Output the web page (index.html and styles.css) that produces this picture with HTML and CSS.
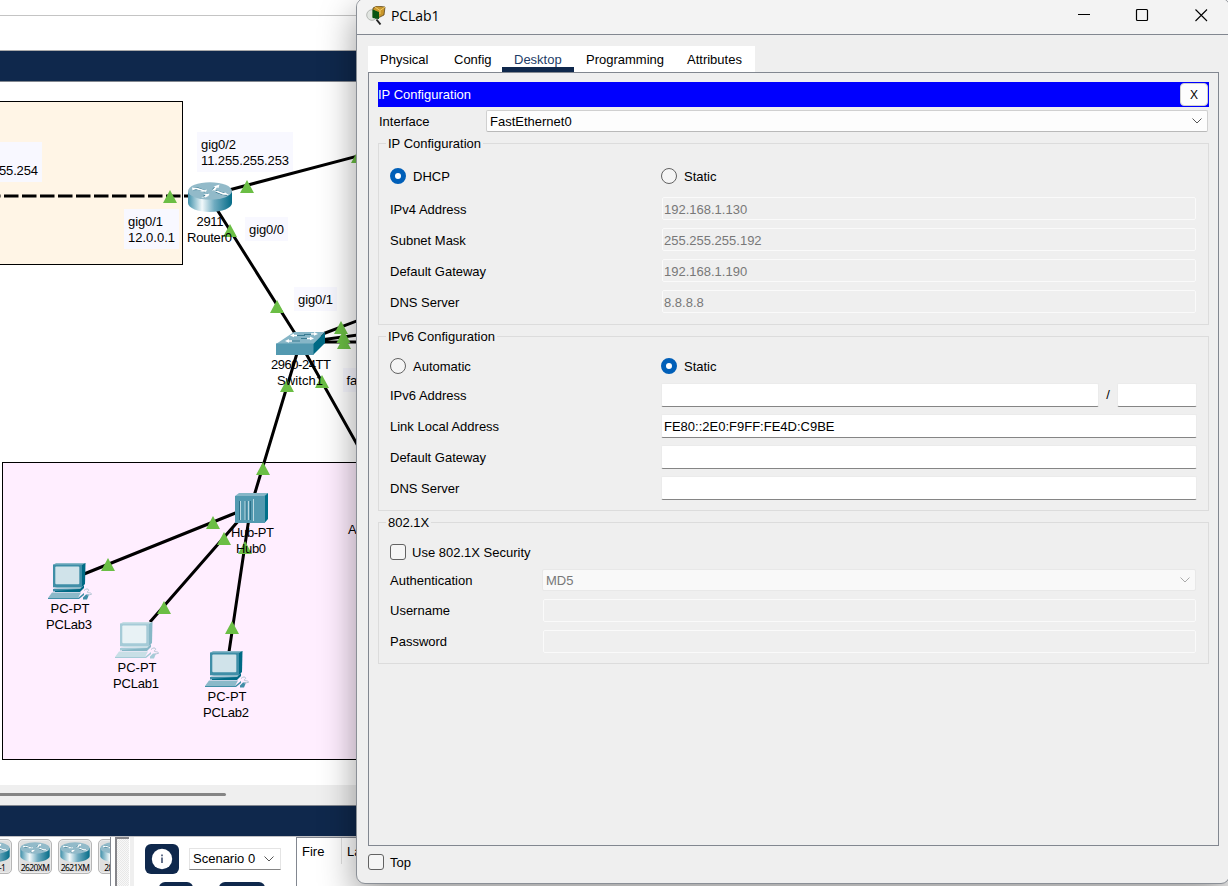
FILE: index.html
```html
<!DOCTYPE html>
<html lang="en">
<head>
<meta charset="utf-8">
<title>PCLab1</title>
<link rel="stylesheet" href="styles.css">
</head>
<body>
<svg class="defs" width="0" height="0">
  <defs>
    <linearGradient id="body" x1="0" x2="1" y1="0" y2="0">
      <stop offset="0" stop-color="#3f90aa"/><stop offset=".32" stop-color="#f2f9fb"/>
      <stop offset=".6" stop-color="#6fabc0"/><stop offset="1" stop-color="#046c88"/>
    </linearGradient>
    <symbol id="router" viewBox="0 0 44 30">
      <path d="M0 9v12c0 5 10 9 22 9s22-4 22-9V9z" fill="url(#body)"/>
      <ellipse cx="22" cy="9" rx="22" ry="8.7" fill="#92bac9"/>
      <g fill="none" stroke="#2b7089" stroke-width="2.4">
        <path d="M5 7l5-.3 7 2.600M15.500 15l4.500-2.500M25 8l3-3M39 12.500l-5-1-6-2.200"/>
      </g>
      <g fill="#fff">
        <path d="M4 5.500l6 .5 7 2.300 2-.8-1 2.200h-6l2-.7-6-1.800-3.500 1z"/>
        <path d="M24 8.500l3-3.500-1.500-.5 6-2-1 3.500-1.500-.6-2 3z"/>
        <path d="M27 9.500l2.500-.8 6 2.300 2-.5 3.500 2.500-6-.2z"/>
        <path d="M13 15.500l3.500-1.200 1-1.300-2-.7 6-.5-1 2.200-3 1.500z"/>
      </g>
    </symbol>
    <symbol id="pc" viewBox="0 0 44 37">
      <path class="pc-light" d="M5 2l3-2h30l-4 2z"/>
      <path class="pc-dark" d="M33.500 2l4-2-.5 21-3.500 3.500z"/>
      <rect class="pc-mid" x="5" y="1.500" width="29" height="22.800"/>
      <rect class="pc-screen" x="7.300" y="3.500" width="24" height="17.800" rx="1"/>
      <path class="pc-light" d="M5 25.500l4-1.500h26l-3 2z"/>
      <path class="pc-mid" d="M5 26h27v2.500H5z"/>
      <path class="pc-dark" d="M32 26l4-4v3l-4 4H7v-1z"/>
      <path class="pc-light" d="M4 29.500h29l-3 5.500H0z"/>
      <path class="pc-mid" d="M0 35h30l6-5v2l-5 4H0zM35 34.500l3-3h3l-2 5h-4z"/>
      <path class="pc-wire" d="M36 27.500c3-3 6-1 4 .8-3 2 4 .7 3.500 3l-4 1"/>
    </symbol>
    <path id="tri" d="M0 0l7 13H-7z" fill="#6bbe45"/>
  </defs>
</svg>

<main class="app">
  <div class="menu-strip"></div>
  <div class="tool-strip"></div>
  <div class="navy"></div>
  <svg class="canvas" width="356" height="703" viewBox="0 82 356 703">
    <rect x="-5" y="101.500" width="187.500" height="163" fill="#fff5e6" stroke="#000"/>
    <rect x="2.500" y="462.500" width="400" height="297" fill="#ffeeff" stroke="#000"/>
    <g fill="#f8f8ff">
      <rect x="0" y="142" width="42" height="40"/><rect x="197" y="132" width="96" height="40"/>
      <rect x="124" y="209" width="55" height="40"/><rect x="245" y="217" width="43" height="24"/>
      <rect x="294" y="287" width="43" height="24"/><rect x="343" y="368" width="30" height="24"/>
    </g>
    <g stroke="#000" stroke-width="3" fill="none">
      <path d="M-14 196H190" stroke-dasharray="14.500 3.500"/>
      <path d="M228 190.200L358 156M216 208L296 335M320 335L358 320.500M320 340L358 335M320 342H358M298 350L254 496M304 350L358 446M238 512L84 574M240 519L150 622M249 518L229 652"/>
    </g>
    <g>
      <use href="#tri" x="170" y="190"/><use href="#tri" x="247" y="180"/><use href="#tri" x="358" y="150"/>
      <use href="#tri" x="230" y="224"/><use href="#tri" x="277" y="300"/><use href="#tri" x="341" y="321"/>
      <use href="#tri" x="343.500" y="330"/><use href="#tri" x="344" y="336"/><use href="#tri" x="322" y="375"/>
      <use href="#tri" x="287" y="379"/><use href="#tri" x="263" y="462"/><use href="#tri" x="213" y="516"/>
      <use href="#tri" x="108" y="558"/><use href="#tri" x="224" y="532"/><use href="#tri" x="245" y="541"/>
      <use href="#tri" x="164" y="601"/><use href="#tri" x="232" y="621"/>
    </g>
    <use href="#router" x="188" y="182" width="44" height="30"/>
    <g>
      <path d="M276 344l18-12h31l-12 12z" fill="#86b6c7"/>
      <path d="M313 344l12-12v11l-12 12z" fill="#006a85"/>
      <rect x="276" y="343.500" width="37.500" height="11.500" fill="#5399b0"/>
      <g fill="none" stroke="#3a7c93"><path d="M295 335.500h10M304 334.500h12M287 341h13M301 338.500h10"/></g>
      <g fill="#fff"><path d="M290 335.500l4-2v1.300h3v1.500h-3v1zM318 334l-4-2v1.300h-3v1.500h3v1zM285 341l4-2v1.300h3v1.500h-3v1zM314 338.500l-4-2v1.300h-3v1.500h3v1z"/></g>
    </g>
    <g>
      <path d="M235 496l4-3h29l-3 3z" fill="#86b6c7"/>
      <path d="M264.500 496l3.500-3v26l-3.500 4z" fill="#00708a"/>
      <rect x="235" y="496" width="30" height="27" fill="#5399b0"/>
      <path d="M239.500 501v19M246 501v19M250.500 501v19" stroke="#2b6f87"/>
      <path d="M240.500 501v19M245 501v19M248.500 501v19M253.500 499v22" stroke="#bcd9e2"/>
    </g>
    <use href="#pc" x="48" y="563" width="44" height="37"/>
    <use class="selected" href="#pc" x="115" y="622" width="44" height="37"/>
    <use href="#pc" x="205" y="651" width="44" height="37"/>
    <g class="label">
      <text x="-1" y="175" textLength="39">55.254</text>
      <text x="201" y="149" textLength="35">gig0/2</text><text x="201" y="165" textLength="88">11.255.255.253</text>
      <text x="128" y="226" textLength="35">gig0/1</text><text x="128" y="242" textLength="47">12.0.0.1</text>
      <text x="249" y="234" textLength="35">gig0/0</text><text x="298" y="304" textLength="35">gig0/1</text>
      <text x="346.500" y="385">fa</text><text x="348" y="534">A</text>
      <text x="196.500" y="226" textLength="27">2911</text><text x="187" y="242" textLength="45">Router0</text>
      <text x="271" y="369" textLength="60">2960-24TT</text><text x="277" y="385" textLength="46">Switch1</text>
      <text x="231" y="537" textLength="43">Hub-PT</text><text x="236" y="553" textLength="30">Hub0</text>
      <text x="50.500" y="613" textLength="39">PC-PT</text><text x="46" y="629" textLength="46">PCLab3</text>
      <text x="117.500" y="672" textLength="39">PC-PT</text><text x="113" y="688" textLength="46">PCLab1</text>
      <text x="207.500" y="701" textLength="39">PC-PT</text><text x="203" y="717" textLength="46">PCLab2</text>
    </g>
  </svg>
  <div class="hscroll"><div class="thumb"></div></div>
  <div class="navy low"></div>
  <div class="bottom">
    <div class="devices">
      <div class="device"><svg width="30" height="20"><use href="#router"/></svg><span>WIC-1</span></div>
      <div class="device"><svg width="30" height="20"><use href="#router"/></svg><span>2620XM</span></div>
      <div class="device"><svg width="30" height="20"><use href="#router"/></svg><span>2621XM</span></div>
      <div class="device"><svg width="30" height="20"><use href="#router"/></svg><span>2811X</span></div>
    </div>
    <div class="hatch"></div>
    <div class="splitter"></div>
    <div class="scenario">
      <div class="scenario-row">
        <div class="info"><svg width="22" height="22"><circle cx="11" cy="11" r="10.200" fill="#fff"/><path d="M11 9.500V15M11 6.500v1.700" stroke="#4b5a78" stroke-width="1.700"/></svg></div>
        <div class="scenario-select"><span>Scenario 0</span><svg width="10" height="6"><path d="M.5.500L5 5 9.500.500" fill="none" stroke="#555"/></svg></div>
      </div>
      <div class="scenario-buttons"><i></i><i class="wide"></i></div>
    </div>
    <div class="events"><span class="fire">Fire</span><span class="last">Last</span></div>
  </div>
</main>

<section class="window">
  <header class="titlebar">
    <svg width="20" height="20" viewBox="0 0 20 20">
      <circle cx="6" cy="9" r="5.300" fill="#e1e5e1" stroke="#b5b9b5"/>
      <path d="M7 2l4-2 8 1-1 8-6 3-5-1z" fill="#c8962c" stroke="#4a3510" stroke-width=".7"/>
      <path d="M9 1l5 3.500L19 1M14 4.500V8" fill="none" stroke="#f0cc6a"/>
      <path d="M6.500 3.500L13 6v7l-6.500-1z" fill="#0c6a17"/>
      <path d="M8 4v8M10 5v8M12 6v7" stroke="#032e08" stroke-width=".7"/>
      <path d="M10.500 13.500l4 5" stroke="#222" stroke-width="2"/>
    </svg>
    <h1>PCLab1</h1>
    <svg class="controls" width="132" height="14" viewBox="0 0 132 14">
      <path d="M0 6.500h12" stroke="#000"/>
      <rect x="58.500" y="1.500" width="11" height="11" rx="1" fill="none" stroke="#000" stroke-width="1.200"/>
      <path d="M117.500 1.500l11.500 11.500M129 1.500L117.500 13" stroke="#000" stroke-width="1.100"/>
    </svg>
  </header>
  <nav class="tabs"><span>Physical</span><span>Config</span><span class="active">Desktop</span><span>Programming</span><span>Attributes</span></nav>
  <div class="panel">
    <div class="banner"><span>IP Configuration</span><button>X</button></div>
    <div class="interface"><span>Interface</span>
      <div class="select"><span>FastEthernet0</span><svg width="10" height="6"><path d="M.5.500L5 5 9.500.500" fill="none" stroke="#555"/></svg></div>
    </div>

    <section class="group ipv4">
      <h2>IP Configuration</h2>
      <div class="row"><label class="choice"><i class="radio on"></i>DHCP</label><label class="choice"><i class="radio"></i>Static</label></div>
      <div class="row"><span>IPv4 Address</span><div class="field off">192.168.1.130</div></div>
      <div class="row"><span>Subnet Mask</span><div class="field off">255.255.255.192</div></div>
      <div class="row"><span>Default Gateway</span><div class="field off">192.168.1.190</div></div>
      <div class="row"><span>DNS Server</span><div class="field off">8.8.8.8</div></div>
    </section>

    <section class="group ipv6">
      <h2>IPv6 Configuration</h2>
      <div class="row"><label class="choice"><i class="radio"></i>Automatic</label><label class="choice"><i class="radio on"></i>Static</label></div>
      <div class="row"><span>IPv6 Address</span><div class="prefixed"><div class="field"></div><span>/</span><div class="field"></div></div></div>
      <div class="row"><span>Link Local Address</span><div class="field">FE80::2E0:F9FF:FE4D:C9BE</div></div>
      <div class="row"><span>Default Gateway</span><div class="field"></div></div>
      <div class="row"><span>DNS Server</span><div class="field"></div></div>
    </section>

    <section class="group dot1x">
      <h2>802.1X</h2>
      <label class="choice"><i class="check"></i>Use 802.1X Security</label>
      <div class="row auth"><span>Authentication</span><div class="select off"><span>MD5</span><svg width="10" height="6"><path d="M.5.500L5 5 9.500.500" fill="none" stroke="#aaa"/></svg></div></div>
      <div class="row"><span>Username</span><div class="field off"></div></div>
      <div class="row"><span>Password</span><div class="field off"></div></div>
    </section>
  </div>
  <footer><label class="choice"><i class="check"></i>Top</label></footer>
</section>
</body>
</html>
```
FILE: styles.css
```css
* { box-sizing: border-box; }
body {
  margin: 0; width: 1228px; height: 886px; overflow: hidden; position: relative;
  background: #fff; color: #000;
  font: 13px/16px "Liberation Sans", Arial, sans-serif;
}
.defs { display: block; position: absolute; }

/* Application behind the dialog */
.app { width: 100%; height: 886px; display: flex; flex-direction: column; }
.menu-strip { height: 16px; border-bottom: 1px solid #c4c4c4; }
.tool-strip { height: 35px; border-bottom: 1px solid #aaa; }
.navy { height: 31px; background: #0f284c; border-bottom: 1px solid #828790; }
.navy.low { height: 31px; border-bottom: 0; border-top: 1px solid #828790; }
.canvas {
  display: block;
  --light: #8bb9c9; --mid: #3f8ea7; --dark: #006a85; --screen: #d0e3ea;
}
.label { font-size: 13px; }
.pc-light { fill: var(--light); }
.pc-mid { fill: var(--mid); }
.pc-dark { fill: var(--dark); }
.pc-screen { fill: var(--screen); }
.pc-wire { fill: none; stroke: #b3c5d3; }
.selected { --light: #c8dfe6; --mid: #a5cbd7; --dark: #86b7c6; --screen: #e8f2f5; }
.hscroll { height: 20px; background: #efefef; display: flex; align-items: flex-start; padding-top: 8px; }
.thumb { width: 226px; height: 3px; background: #858585; border-radius: 0 2px 2px 0; }
.bottom { height: 50px; display: flex; border-top: 1px solid #c0c0c4; }
.devices { width: 111px; border-right: 1px solid #828790; padding-top: 2px; display: flex; gap: 6px; overflow: hidden; }
.device {
  flex: none; width: 34px; height: 35px; border: 1px solid #b6b6b6; border-radius: 5px;
  background: #dfdfdf; display: flex; flex-direction: column; align-items: center; padding-top: 2px;
  box-shadow: inset 0 0 0 1px #eaeaea;
}
.device:first-child { margin-left: -22px; }
.device span { font: 8.5px/9px "Noto Sans", sans-serif; letter-spacing: -.6px; margin-top: 1px; }
.hatch {
  width: 14px; margin-left: 4px; border-left: 2px solid #85858a; border-top: 2px solid #85858a;
  background: repeating-conic-gradient(#f8f8f8 0 25%, #e8e8e8 0 50%) 0 0 / 2px 2px;
}
.splitter { width: 4px; margin-left: 1px; background: #efefef; }
.scenario { width: 162px; padding: 7px 0 0 11px; }
.scenario-row { display: flex; align-items: center; gap: 10px; }
.info { width: 34px; height: 30px; border-radius: 6px; background: #0f284c; display: grid; place-items: center; }
.scenario-select {
  width: 92px; height: 22px; padding: 0 6px 0 3px; border: 1px solid #e4e4e4; border-bottom-color: #858585;
  display: flex; align-items: center; justify-content: space-between; background: #fff;
}
.scenario-buttons { display: flex; gap: 26px; margin: 8px 0 0 14px; }
.scenario-buttons i { width: 34px; height: 20px; background: #0f284c; border-radius: 6px; }
.scenario-buttons .wide { width: 46px; }
.events { flex: 1; border-left: 1px solid #828790; border-top: 1px solid #828790; display: flex; padding-left: 5px; }
.fire { width: 40px; height: 26px; padding-top: 6px; border-right: 1px solid #e0e0e0; }
.last { padding: 6px 5px; white-space: nowrap; }

/* Dialog window */
.window {
  position: absolute; left: 356px; top: -2px; width: 874px; height: 886px;
  background: #efefef; border: 1px solid #8a8f96; border-radius: 9px;
  box-shadow: 0 14px 36px rgba(0, 0, 0, .4);
  display: flex; flex-direction: column;
}
.titlebar {
  height: 36px; flex: none; padding: 0 15px 0 9px; border-bottom: 1px solid #828790; border-radius: 8px 8px 0 0;
  background: #f3f3f3; display: flex; align-items: center;
}
.titlebar h1 { margin: 0 auto 2px 5px; font: 14px/18px "Open Sans", "Noto Sans", sans-serif; letter-spacing: -.1px; }
.titlebar > svg { margin-bottom: 2px; }
.titlebar .controls { margin-bottom: 3px; margin-right: 4px; }
.tabs { align-self: flex-start; height: 26px; margin: 11px 0 0 11px; background: #fff; display: flex; }
.tabs span { padding: 6px 12px 0; white-space: nowrap; }
.tabs span:first-child { width: 74px; }
.tabs span:nth-child(2) { width: 60px; }
.tabs .active { width: 72px; border-bottom: 5px solid #0f284c; color: #1c3c66; }
.tabs span:nth-child(4) { width: 101px; }
.tabs span:last-child { width: 80px; }
.panel { margin: 0 11px 0 11px; width: 851px; height: 774px; border: 1px solid #828790; padding: 9px; }
.banner { height: 25px; background: #00f; color: #fff; display: flex; justify-content: space-between; align-items: center; }
.banner button {
  width: 28px; height: 23px; margin-right: 1px; padding: 0; background: #fdfdfd; color: #000;
  border: 1px solid #d0d0d0; border-radius: 4px; font: 12px/14px "Liberation Sans", sans-serif;
}
.interface { display: flex; height: 22px; margin: 3px 1px 0; align-items: center; justify-content: space-between; }
.interface .select { width: 722px; }
.interface span { padding-top: 2px; }
.select {
  height: 22px; padding: 0 5px 0 3px; background: #fdfdfd; border: 1px solid #d0d0d0; border-bottom-color: #b9b9b9;
  border-radius: 2px; display: flex; align-items: center; justify-content: space-between;
}
.select.off { background: #f9f9f9; border-color: #e8e8e8; color: #787878; }
.group { width: 831px; border: 1px solid #dcdcdc; padding: 0 12px 0 11px; display: grid; align-content: start; position: relative; }
.group h2 { position: absolute; left: 7px; top: -8px; margin: 0; padding: 0 2px; background: #efefef; font-weight: 400; font-size: 13px; line-height: 16px; }
.row { display: grid; grid-template-columns: 271px 1fr; align-items: center; }
.ipv4 .row > span, .ipv6 .row > span, .auth span { padding-top: 2px; }
.ipv4 { height: 182px; margin-top: 11px; padding-top: 24px; grid-template-rows: 25px repeat(4, 31px); }
.ipv6 { height: 175px; margin-top: 11px; padding-top: 21px; grid-template-rows: 21px repeat(4, 31px); }
.ipv4 .choice, .ipv6 .choice { align-self: start; }
.dot1x { height: 142px; margin-top: 11px; padding-top: 16px; grid-template-rows: 26px 30px 31px 31px; align-items: center; }
.dot1x .row { grid-template-columns: 152px 1fr; }
.choice { display: flex; align-items: flex-start; gap: 7px; height: 16px; line-height: 18px; white-space: nowrap; }
.radio, .check { width: 16px; height: 16px; flex: none; border: 1px solid #626262; background: #f5f5f5; }
.radio { border-radius: 50%; }
.radio.on { border: 5px solid #005fb8; background: #fff; }
.check { border-radius: 3px; }
.dot1x .choice { gap: 6px; }
.field { height: 24px; background: #fff; border: 1px solid #ebebeb; border-bottom-color: #858585; border-radius: 2px; padding: 4px 2px 0; }
.field.off { height: 23px; margin-left: 1px; background: #efefef; border: 1px solid #fafafa; color: #787878; padding: 4px 1px 0; }
.prefixed { display: grid; grid-template-columns: 438px 18px 80px; align-items: center; text-align: center; }
footer { padding: 8px 0 0 11px; }
footer .choice { gap: 6px; }
```
